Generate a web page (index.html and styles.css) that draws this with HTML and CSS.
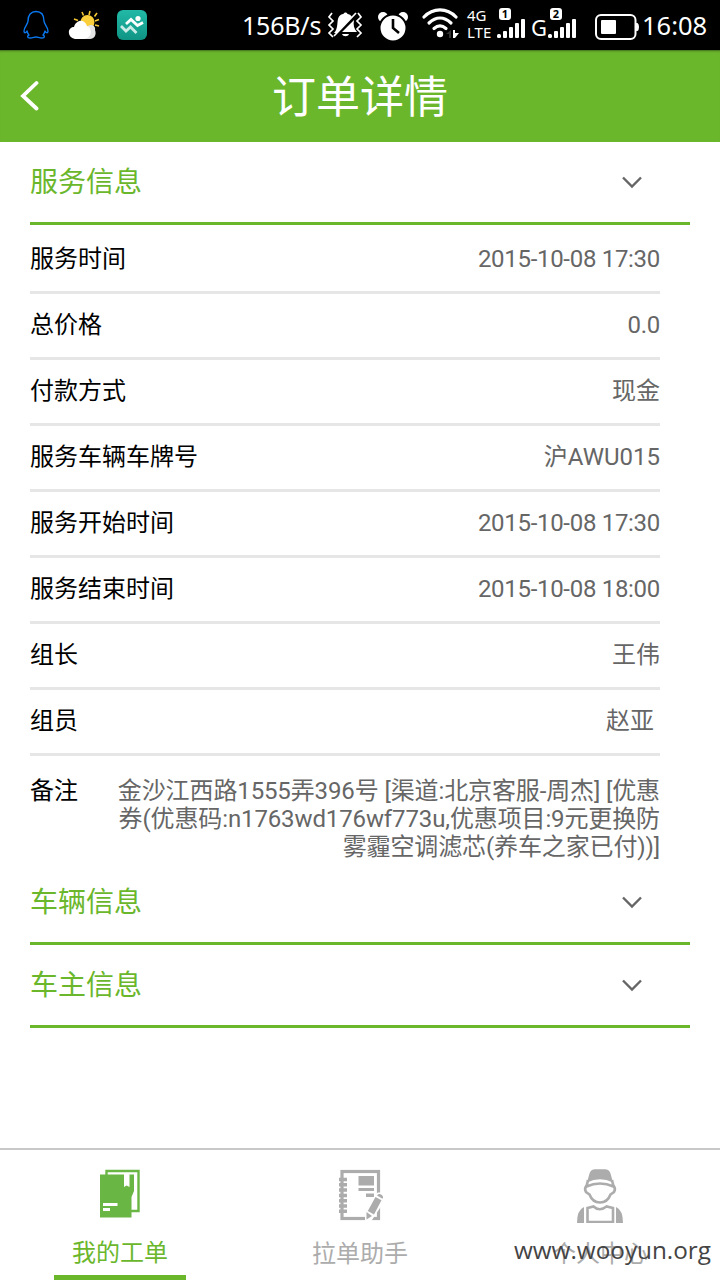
FILE: index.html
```html
<!DOCTYPE html>
<html lang="zh-CN">
<head>
<meta charset="UTF-8">
<meta name="viewport" content="width=device-width, initial-scale=1.0">
<title>订单详情</title>
<link rel="stylesheet" href="styles.css">
</head>
<body>

<!-- 状态栏 -->
<div class="status-bar">
    <div class="status-left">
        <svg class="icon-qq" width="26" height="30" viewBox="0 0 26 30" fill="none" stroke="#0a78f0" stroke-width="1.4" stroke-linejoin="round">
            <path d="M5 11C5 5 8 1.5 13 1.5S21 5 21 11C21 14 25 17 25 21C25 23 23.5 23.5 22 21C21.500 23 21 24 20 25C22 26 22 28 19 28C16 28 15 27 13 27C11 27 10 28 7 28C4 28 4 26 6 25C5 24 4.500 23 4 21C2.500 23.500 1 23 1 21C1 17 5 14 5 11Z"/>
        </svg>
        <svg class="icon-weather" width="32" height="30" viewBox="0 0 32 30">
            <path d="M14 2l1.500 3.500M22 1l-1 4M29 3l-2.500 3.500M6 9l4 1.500M27 11l4-1.500M27 15l4 1" stroke="#f4c935" stroke-width="1.600"/>
            <circle cx="19.500" cy="12" r="7" fill="#fbcf3c"/>
            <path d="M19 17C23 13 28 16 27 20C29 25 26 29 22 29H12Z" fill="#e3e3e3"/>
            <path d="M7 29C-1 28-1 17 6 17C8 10 16 8 19 16C24 17 25 28 16 29Z" fill="#fff"/>
        </svg>
        <svg class="icon-run" width="30" height="30" viewBox="0 0 30 30">
            <defs>
                <linearGradient id="runBg" x1="0" y1="0" x2="0" y2="1">
                    <stop offset="0" stop-color="#22b9a7"/>
                    <stop offset="1" stop-color="#0f9484"/>
                </linearGradient>
            </defs>
            <rect width="30" height="30" rx="6" fill="url(#runBg)"/>
            <circle cx="21" cy="8.500" r="2.600" fill="#fff"/>
            <path d="M9 14L14 9.500L20.500 15.500L26 12.500" fill="none" stroke="#fff" stroke-width="2.800"/>
            <path d="M4 16L9 21L13.500 17L19.500 23" fill="none" stroke="#c9ece7" stroke-width="2.800"/>
        </svg>
    </div>
    <div class="status-right">
        <span class="net-speed">156B/s</span>
        <svg class="icon-silent" width="36" height="28" viewBox="0 0 36 28">
            <path d="M5 2L2 6L6 10L2 14L6 18L2 22L6 26M31 2L34 6L30 10L34 14L30 18L34 22L30 26" fill="none" stroke="#fff" stroke-width="1.700"/>
            <path d="M7 22C11 18 10 12 11 8C12 4 15 3 16.500 3C17 1 20 1 20.500 3C22 3 24 4 25 6L10 22Z" fill="#fff"/>
            <path d="M27 9C26 14 27 18 30 21H15ZM15 23H22C21 26 16 26 15 23Z" fill="#fff"/>
            <path d="M7 25L29 2" stroke="#fff" stroke-width="1.700"/>
        </svg>
        <svg class="icon-alarm" width="30" height="30" viewBox="0 0 30 30">
            <circle cx="5" cy="6" r="5" fill="#fff"/>
            <circle cx="25" cy="6" r="5" fill="#fff"/>
            <circle cx="15" cy="17" r="13.500" fill="#fff" stroke="#000" stroke-width="2"/>
            <path d="M15 8V17L21 22" fill="none" stroke="#000" stroke-width="2.600"/>
        </svg>
        <svg class="icon-wifi" width="38" height="32" viewBox="0 0 38 32">
            <g fill="none" stroke="#fff" stroke-width="3.200" stroke-linecap="round">
                <path d="M2 10C11 .5 25 .5 34 10"/>
                <path d="M7 16C14 9.500 22 9.500 29 16"/>
                <path d="M12 21.500C16 18 20 18 24 21.500"/>
            </g>
            <circle cx="18" cy="27" r="3.200" fill="#fff"/>
            <path d="M31 23h2v3h4l-4 5h-2z" fill="#fff"/>
            <path d="M29 31h-2v-4h-3l5-4z" fill="#333"/>
        </svg>
        <span class="net-type"><span>4G</span><span>LTE</span></span>
        <span class="signal">
            <span class="sim-no">1</span>
            <svg width="29" height="19" viewBox="0 0 29 19" fill="#fff">
                <rect x="0" y="15" width="4" height="4" rx="1.500"/>
                <rect x="6" y="12" width="4" height="7" rx="1"/>
                <rect x="12" y="8" width="4" height="11" rx="1"/>
                <rect x="18" y="4" width="4" height="15" rx="1"/>
                <rect x="24" y="0" width="4" height="19" rx="1"/>
            </svg>
        </span>
        <span class="net-g">G</span>
        <span class="signal">
            <span class="sim-no">2</span>
            <svg width="29" height="19" viewBox="0 0 29 19" fill="#fff">
                <rect x="0" y="15" width="4" height="4" rx="1.500"/>
                <rect x="6" y="12" width="4" height="7" rx="1"/>
                <rect x="12" y="8" width="4" height="11" rx="1"/>
                <rect x="18" y="4" width="4" height="15" rx="1"/>
                <rect x="24" y="0" width="4" height="19" rx="1"/>
            </svg>
        </span>
        <svg class="icon-battery" width="44" height="26" viewBox="0 0 44 26">
            <rect x="1" y="1" width="39.500" height="24" rx="5" fill="none" stroke="#fff" stroke-width="2"/>
            <rect x="6" y="6" width="15" height="14" rx="1" fill="#fff"/>
            <path d="M41 9h1.500q1.500 1 1.500 4t-1.500 4H41z" fill="#fff"/>
        </svg>
        <span class="clock">16:08</span>
    </div>
</div>

<!-- Header -->
<header>
    <svg class="back" width="20" height="32" viewBox="0 0 20 32">
        <path d="M17.500 3L4 16L17.500 28.500" fill="none" stroke="#fff" stroke-width="3.800" stroke-linecap="round"/>
    </svg>
    <h1>订单详情</h1>
</header>

<main>
    <!-- 服务信息 -->
    <div class="section-title">
        <h2>服务信息</h2>
        <svg class="arrow" width="20" height="13" viewBox="0 0 20 13"><path d="M1 1.500L10 10.500L19 1.500"/></svg>
    </div>
    <ul class="info-list">
        <li><span class="label">服务时间</span><span class="value number">2015-10-08 17:30</span></li>
        <li><span class="label">总价格</span><span class="value number">0.0</span></li>
        <li><span class="label">付款方式</span><span class="value">现金</span></li>
        <li><span class="label">服务车辆车牌号</span><span class="value">沪AWU015</span></li>
        <li><span class="label">服务开始时间</span><span class="value number">2015-10-08 17:30</span></li>
        <li><span class="label">服务结束时间</span><span class="value number">2015-10-08 18:00</span></li>
        <li><span class="label">组长</span><span class="value">王伟</span></li>
        <li><span class="label">组员</span><span class="value members">赵亚</span></li>
    </ul>
    <div class="remark">
        <span class="label">备注</span>
        <p class="value">金沙江西路1555弄396号 [渠道:北京客服-周杰] [优惠<br>券(优惠码:n1763wd176wf773u,优惠项目:9元更换防<br>雾霾空调滤芯(养车之家已付))]</p>
    </div>

    <!-- 车辆信息 -->
    <div class="section-title">
        <h2>车辆信息</h2>
        <svg class="arrow" width="20" height="13" viewBox="0 0 20 13"><path d="M1 1.500L10 10.500L19 1.500"/></svg>
    </div>

    <!-- 车主信息 -->
    <div class="section-title">
        <h2>车主信息</h2>
        <svg class="arrow" width="20" height="13" viewBox="0 0 20 13"><path d="M1 1.500L10 10.500L19 1.500"/></svg>
    </div>
</main>

<!-- 底部导航 -->
<footer>
    <div class="tab active">
        <svg width="40" height="50" viewBox="0 0 40 50">
            <path d="M6.500 6V2H38.500V42H31" fill="none" stroke="#6ab644" stroke-width="2.400"/>
            <path d="M0 5.500H24V18L26.500 16.500L29.500 18V5.500H34V22L31.500 28V48.500H0Z" fill="#6ab644"/>
            <path d="M3 34H17.500V37H3ZM3 39H10V42H3Z" fill="#fff"/>
        </svg>
        <span>我的工单</span>
    </div>
    <div class="tab">
        <svg width="45" height="52" viewBox="0 0 45 52">
            <rect x="4" y="2.500" width="36.500" height="47" fill="none" stroke="#acacac" stroke-width="3.200"/>
            <path d="M1 10.500H9M1 15.800H9M1 21.100H9M1 26.400H9M1 31.700H9M1 37H9M1 42.300H9" stroke="#acacac" stroke-width="3.500"/>
            <path d="M20.500 7H36V16.500H20.500ZM20.500 19H36V22H20.500ZM28 24.500H36V28H28Z" fill="#acacac"/>
            <path d="M37 26L40 23.500H46V33L32 54L27 51.500V42Z" fill="#fff"/>
            <path d="M37.500 28L43.500 31.300L36 45.500L29.800 42ZM39 26.500Q41 24 43.500 25.800T44.500 29.800ZM28.500 43L34 47L28.500 50.500Z" fill="#acacac"/>
        </svg>
        <span>拉单助手</span>
    </div>
    <div class="tab">
        <svg width="46" height="54" viewBox="0 0 46 54" fill="none" stroke="#acacac" stroke-width="2.600">
            <path d="M10 13.500L12.500 4.500Q14 .3 18 .3H28Q32 .3 33.500 4.500L36 13.500Q23 7 10 13.500Z" fill="#acacac" stroke="none"/>
            <path d="M11 11L9.500 17.500Q23 11.500 36.500 17.500L35 11"/>
            <path d="M9.500 16.500Q7 20 9 23L12.500 25.500Q15.500 33.500 23 33.500T33.500 25.500L37 23Q39 20 36.500 16.500"/>
            <path d="M10.500 39L16.500 37.500Q22.500 43 29.500 37.500L36 39V53H10.500Z"/>
            <path d="M7 38V54H0Q0 41 7 38ZM39 38V54H46Q46 41 39 38Z" fill="#acacac" stroke="none"/>
        </svg>
        <span>个人中心</span>
    </div>
    <div class="watermark">www.wooyun.org</div>
</footer>

</body>
</html>
```
FILE: styles.css
```css
* {
    box-sizing: border-box;
}

body {
    font-family: Roboto, "Noto Sans CJK SC", sans-serif;
    margin: 0;
    height: 1280px;
    display: flex;
    flex-direction: column;
    background-color: #fff;
    overflow: hidden;
}

svg {
    display: block;
    flex: none;
}

/* 状态栏 */
.status-bar {
    height: 50px;
    flex: none;
    display: flex;
    justify-content: space-between;
    background-color: #000;
    color: #fff;
    font-family: "Noto Sans", sans-serif;
}

.status-left,
.status-right {
    display: flex;
    align-items: center;
}

.status-left {
    padding-left: 23px;
}

.icon-weather {
    margin-left: 19px;
}

.icon-run {
    margin-left: 17px;
}

.status-right {
    width: 478px;
    white-space: nowrap;
}

.net-speed {
    width: 85px;
    font-size: 25px;
    letter-spacing: -0.2px;
}

.icon-alarm {
    margin: 2px 0 0 15px;
}

.icon-wifi {
    margin: -4px 0 0 14px;
}

.net-type {
    width: 29px;
    margin: -3px 0 0 7px;
    display: flex;
    flex-direction: column;
    font-size: 15px;
    line-height: 17px;
}

.signal {
    width: 29px;
    height: 30px;
    margin: -4px 0 0 1px;
    display: flex;
    flex-direction: column;
    justify-content: space-between;
}

.sim-no {
    width: 12px;
    height: 12px;
    margin-left: 2px;
    border-radius: 3px;
    background-color: #fff;
    color: #000;
    font-size: 11px;
    font-weight: bold;
    line-height: 12px;
    text-align: center;
}

.signal svg {
    margin-top: -1px;
}

.net-g {
    width: 16px;
    margin: 3px 0 0 5px;
    font-size: 22px;
}

.icon-battery {
    margin: 4px 0 0 18px;
}

.clock {
    margin-left: 3px;
    font-size: 25.5px;
}

/* Header */
header {
    height: 92px;
    flex: none;
    display: flex;
    align-items: center;
    background-color: #6bb72c;
    box-shadow: inset 0 1px 0 #4b8020, inset 0 3px 2px -1px #5c9e26;
    color: #fff;
}

.back {
    margin-left: 19px;
}

header h1 {
    flex: 1;
    margin: 4px 39px 0 0;
    font-size: 44px;
    font-weight: normal;
    line-height: 60px;
    text-align: center;
}

main {
    flex: 1;
    padding: 0 30px;
}

/* 分组标题 */
.section-title {
    height: 83px;
    padding-right: 48px;
    display: flex;
    align-items: center;
    justify-content: space-between;
    border-bottom: 3px solid #6bb72c;
}

.section-title h2 {
    margin: 2px 0 0;
    color: #6bb72c;
    font-size: 28px;
    font-weight: normal;
    line-height: 40px;
}

.arrow path {
    fill: none;
    stroke: #666;
    stroke-width: 2.4;
}

.info-list {
    margin: 0 30px 0 0;
    padding: 0;
    list-style: none;
}

.info-list li {
    height: 66px;
    padding-bottom: 2px;
    display: flex;
    align-items: center;
    justify-content: space-between;
    border-bottom: 3px solid #e6e6e6;
    font-size: 24px;
    line-height: 36px;
}

.info-list li:first-child {
    height: 69px;
    padding: 2px 0 0;
}

.label {
    color: #000;
}

.value {
    color: #666;
}

.number {
    letter-spacing: -0.3px;
}

.members {
    padding-right: 6px;
}

/* 备注 */
.remark {
    height: 106px;
    margin-right: 30px;
    padding-top: 21px;
    display: flex;
    justify-content: space-between;
    font-size: 24px;
    line-height: 28px;
}

.remark .value {
    margin: 0;
    letter-spacing: -0.12px;
    text-align: right;
    white-space: nowrap;
}

/* 底部导航 */
footer {
    position: relative;
    height: 132px;
    flex: none;
    display: flex;
    justify-content: space-around;
    border-top: 2px solid #c8c8c8;
}

.tab {
    width: 132px;
    padding-top: 19px;
    display: flex;
    flex-direction: column;
    align-items: center;
    color: #acacac;
    font-size: 24px;
    line-height: 36px;
}

.tab svg {
    margin-bottom: auto;
}

.tab span {
    margin-bottom: 8px;
}

.tab.active {
    border-bottom: 5px solid #6bb72c;
    color: #6bb72c;
}

.tab.active span {
    margin-bottom: 4px;
}

.watermark {
    position: absolute;
    right: 9px;
    bottom: 12px;
    color: #444;
    font-family: "Open Sans", sans-serif;
    font-size: 24.3px;
    line-height: 36px;
}
```
